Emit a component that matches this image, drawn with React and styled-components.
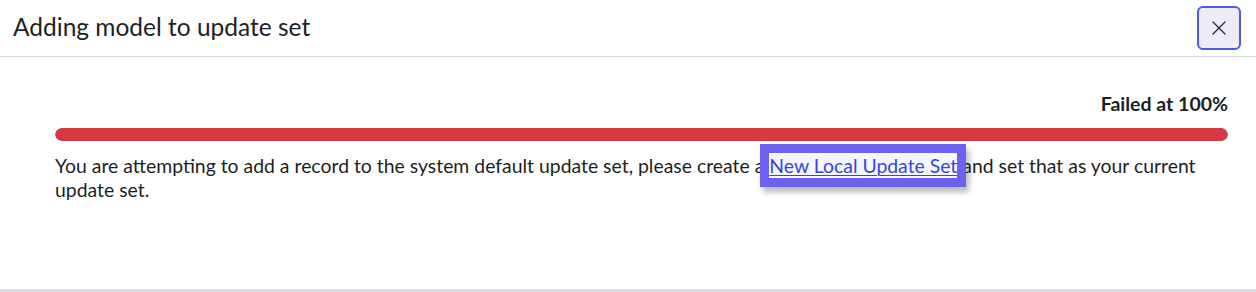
import React from 'react';
import styled, { createGlobalStyle } from 'styled-components';

const GlobalStyle = createGlobalStyle`
  html, body {
    margin: 0;
    padding: 0;
    background: #fff;
  }
  body {
    font-family: Lato, "Liberation Sans", sans-serif;
    color: #1d1f24;
  }
`;

const Modal = styled.div`
  width: 1256px;
  height: 292px;
  box-sizing: border-box;
  display: flex;
  flex-direction: column;
  border-bottom: 3px solid #dcdce2;
`;

const Header = styled.div`
  display: flex;
  align-items: center;
  justify-content: space-between;
  height: 57px;
  box-sizing: border-box;
  padding: 0 15px 0 13px;
  border-bottom: 1px solid #d6d6dd;
`;

const Title = styled.h1`
  margin: 0;
  font-size: 24.5px;
  font-weight: 400;
  line-height: 1;
  color: #1d1f24;
  padding-bottom: 2px;
`;

const CloseButton = styled.button`
  width: 44px;
  height: 44px;
  display: flex;
  align-items: center;
  justify-content: center;
  background: #ececf6;
  border: 2px solid #4a5ce6;
  border-radius: 6px;
  padding: 0;
  color: #2a2c33;
  cursor: pointer;
`;

const Body = styled.div`
  display: flex;
  flex-direction: column;
  padding: 36px 28px 0 55px;
`;

const Status = styled.div`
  align-self: flex-end;
  font-size: 19.5px;
  font-weight: 700;
  line-height: 22px;
  color: #1d1f24;
`;

const Track = styled.div`
  margin-top: 13px;
  height: 13px;
  border-radius: 7px;
  background: #eee;
  overflow: hidden;
`;

const Fill = styled.div`
  height: 100%;
  background: #d63942;
  border-radius: 7px;
`;

const Message = styled.p`
  margin: 13px 0 0;
  font-size: 19.4px;
  line-height: 24px;
  color: #1d1f24;
`;

const Link = styled.a`
  color: #3447d9;
  text-decoration: underline;
  text-decoration-thickness: 1px;
  text-underline-offset: 2px;
  background: #f6f6ff;
  outline: 9px solid #6c62ef;
  box-shadow: 3px 5px 6px 9px rgba(0, 0, 0, 0.28);
  padding: 1px 0;
`;

export default function App() {
  const percent = 100;
  return (
    <>
      <GlobalStyle />
      <Modal>
        <Header>
          <Title>Adding model to update set</Title>
          <CloseButton aria-label="Close">
            <svg width="16" height="16" viewBox="0 0 16 16" fill="none" stroke="currentColor" strokeWidth="1.4" strokeLinecap="round">
              <path d="M2 2 L14 14 M14 2 L2 14" />
            </svg>
          </CloseButton>
        </Header>
        <Body>
          <Status>Failed at {percent}%</Status>
          <Track>
            <Fill style={{ width: `${percent}%` }} />
          </Track>
          <Message>
            You are attempting to add a record to the system default update set, please create a{' '}
            <Link href="#">New Local Update Set</Link> and set that as your current update set.
          </Message>
        </Body>
      </Modal>
    </>
  );
}
